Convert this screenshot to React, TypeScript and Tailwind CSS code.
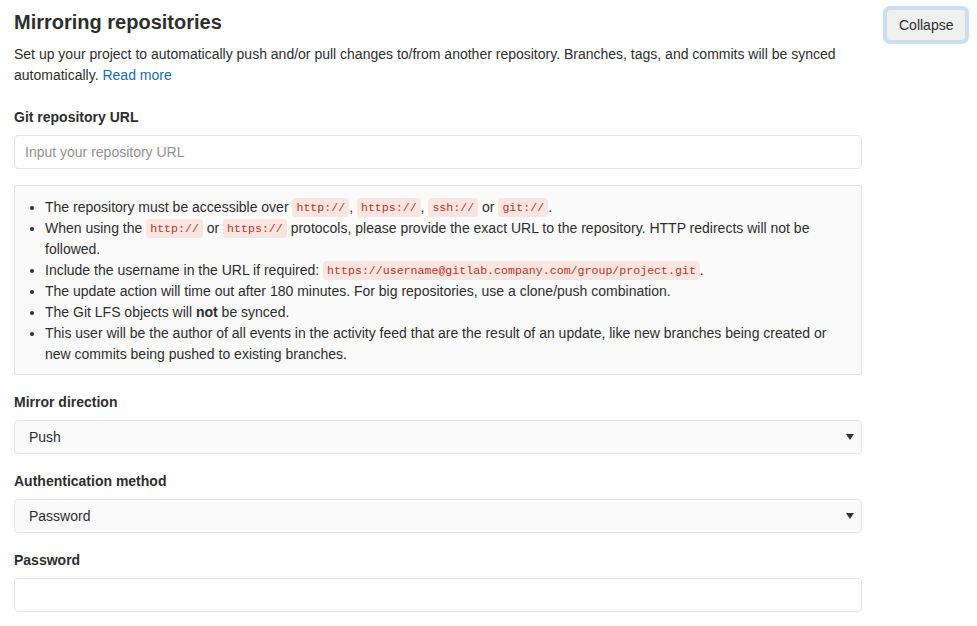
import React from "react";

const Code = ({ children }: { children: React.ReactNode }) => (
  <code className="rounded-[4px] bg-[#fbe5e1] px-[4px] py-[3px] align-[1px] font-['Liberation_Mono',monospace] text-[11.6px] leading-[12px] text-[#c0341d]">
    {children}
  </code>
);

const Caret = () => (
  <svg width="8" height="6" viewBox="0 0 8 6" className="pointer-events-none absolute right-[8px] top-1/2 -translate-y-1/2">
    <path d="M0 0h8L4 6z" fill="#333" />
  </svg>
);

export default function App() {
  return (
    <div className="flex min-h-screen bg-white px-[14px] font-['Liberation_Sans',Arial,sans-serif] text-[14px] leading-[21px] text-[#2e2e2e]">
      <div className="w-[848px] shrink-0">
        <h4 className="mt-[8px] text-[20px] font-semibold leading-[28px] text-[#2e2e2e]">Mirroring repositories</h4>
        <p className="mt-[8px]">
          Set up your project to automatically push and/or pull changes to/from another repository. Branches, tags, and commits will be synced automatically.{" "}
          <a href="#" className="text-[#1b69b6]">Read more</a>
        </p>

        {/* Repository URL */}
        <div className="mt-[21px]">
          <label className="block font-semibold">Git repository URL</label>
          <input
            placeholder="Input your repository URL"
            className="mt-[7px] h-[34px] w-full rounded-[4px] border border-[#e5e5e5] px-[10px] text-[14px] outline-none placeholder:text-[#919191]"
          />
        </div>

        <div className="mt-[16px] rounded-[2px] border border-[#e5e5e5] bg-[#fafafa] pt-[11px] pb-[9px] pr-[16px]">
          <ul className="list-disc pl-[30px]">
            <li>
              The repository must be accessible over <Code>http://</Code>, <Code>https://</Code>, <Code>ssh://</Code> or <Code>git://</Code>.
            </li>
            <li>
              When using the <Code>http://</Code> or <Code>https://</Code> protocols, please provide the exact URL to the repository. HTTP redirects will not be followed.
            </li>
            <li>
              Include the username in the URL if required: <Code>https://username@gitlab.company.com/group/project.git</Code>.
            </li>
            <li>The update action will time out after 180 minutes. For big repositories, use a clone/push combination.</li>
            <li>
              The Git LFS objects will <strong className="font-bold">not</strong> be synced.
            </li>
            <li>
              This user will be the author of all events in the activity feed that are the result of an update, like new branches being created or new commits being pushed to existing branches.
            </li>
          </ul>
        </div>

        {/* Mirror direction */}
        <div className="mt-[17px]">
          <label className="block font-semibold">Mirror direction</label>
          <div className="relative mt-[7px]">
            <select className="h-[34px] w-full appearance-none rounded-[4px] border border-[#e5e5e5] bg-[#fafafa] px-[14px] text-[14px] text-[#2e2e2e] outline-none">
              <option>Push</option>
            </select>
            <Caret />
          </div>
        </div>

        <div className="mt-[17px]">
          <label className="block font-semibold">Authentication method</label>
          <div className="relative mt-[7px]">
            <select className="h-[34px] w-full appearance-none rounded-[4px] border border-[#e5e5e5] bg-[#fafafa] px-[14px] text-[14px] text-[#2e2e2e] outline-none">
              <option>Password</option>
            </select>
            <Caret />
          </div>
        </div>

        <div className="mt-[17px]">
          <label className="block font-semibold">Password</label>
          <input
            type="password"
            className="mt-[7px] h-[34px] w-full rounded-[4px] border border-[#e5e5e5] px-[10px] text-[14px] outline-none"
          />
        </div>
      </div>

      <div className="ml-[24px] pt-[9px]">
        <button className="h-[32px] rounded-[4px] border border-[#d9d9d9] bg-[#f0f0f0] px-[12px] text-[14px] text-[#2e2e2e] shadow-[0_0_0_3px_#c6e0fc]">
          Collapse
        </button>
      </div>
    </div>
  );
}
